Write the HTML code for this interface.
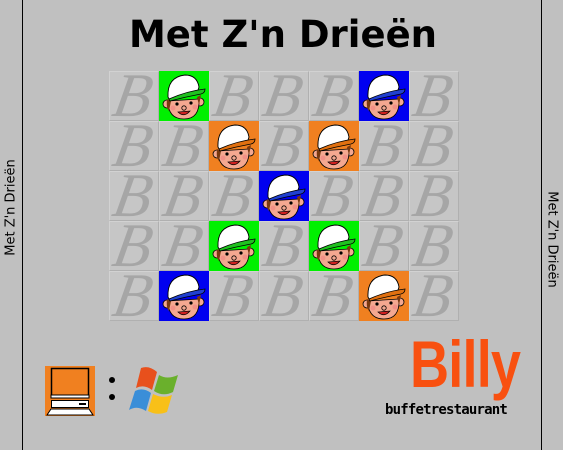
<!DOCTYPE html>
<html><head><meta charset="utf-8"><style>
body{margin:0;width:563px;height:450px;background:#c0c0c0;position:relative;overflow:hidden;font-family:"DejaVu Sans","Liberation Sans",sans-serif}
.vl{position:absolute;top:0;width:1px;height:450px;background:#000}
.title{position:absolute;left:0;width:566px;top:13px;text-align:center;font-weight:bold;font-size:37px;color:#000}
.side{position:absolute;font-size:13px;white-space:nowrap;width:130px;text-align:center}
.grid{position:absolute;left:109px;top:71px;width:350px;height:250px;display:grid;grid-template-columns:repeat(7,50px);grid-template-rows:repeat(5,50px)}
.c{width:50px;height:50px;position:relative;box-sizing:border-box;overflow:hidden}
.b{background:#c6c6c6;border:1px solid #b0b0b0;border-top-color:#d2d2d2;border-left-color:#d2d2d2}
.b span{position:absolute;left:4px;top:-8px;font-family:"Liberation Serif",serif;font-style:italic;font-size:62px;color:#a6a6a6;line-height:64px;transform:skewX(-10deg)}
.g{background:#00f000}.o{background:#f08020}.u{background:#0000f0}
.c svg{position:absolute;left:0;top:0}
</style></head><body>
<div class="vl" style="left:22px"></div>
<div class="vl" style="left:541px"></div>
<div class="title">Met Z'n Drieën</div>
<div class="side" style="left:-54px;top:200px;transform:rotate(-90deg)">Met Z'n Drieën</div>
<div class="side" style="left:487px;top:232px;transform:rotate(90deg)">Met Z'n Drieën</div>
<svg width="0" height="0" style="position:absolute"><defs>
<symbol id="f" viewBox="0 0 50 50">
<circle cx="8" cy="33" r="4" fill="#f4a890" stroke="#000" stroke-width="0.8"/>
<circle cx="41" cy="31" r="4" fill="#f4a890" stroke="#000" stroke-width="0.8"/>
<path d="M9 30 Q9 48 25 48 Q41 48 40 28 Z" fill="#f4a890" stroke="#000" stroke-width="0.8"/>
<path d="M8 28 Q7 37 10 40 L12 30 Z M38 26 L42 24 L40 34 Z" fill="#7a3a10"/>
<path d="M9 26 Q8 6 26 4 Q38 4 40 16 L38 22 Q25 24 10 28 Z" fill="#fff" stroke="#000" stroke-width="0.9"/>
<path d="M10 28 Q28 20 46 18 Q46 22 42 23 Q26 26 11 30 Z" fill="currentColor" stroke="#000" stroke-width="0.8"/>
<circle cx="18" cy="33" r="1.6"/><circle cx="32" cy="32" r="1.6"/>
<circle cx="25" cy="37" r="2.2" fill="none" stroke="#000" stroke-width="0.8"/>
<circle cx="14" cy="37" r="2.5" fill="#f08080" opacity=".6"/><circle cx="36" cy="36" r="2.5" fill="#f08080" opacity=".6"/>
<path d="M19 41 Q25 47 31 40 Z" fill="#d02020" stroke="#000" stroke-width="0.7"/>
</symbol></defs></svg>
<div class="grid">
<div class="c b"><span>B</span></div><div class="c g"><svg width="50" height="50" style="color:#20c020"><use href="#f"/></svg></div><div class="c b"><span>B</span></div><div class="c b"><span>B</span></div><div class="c b"><span>B</span></div><div class="c u"><svg width="50" height="50" style="color:#2040d0"><use href="#f"/></svg></div><div class="c b"><span>B</span></div>
<div class="c b"><span>B</span></div><div class="c b"><span>B</span></div><div class="c o"><svg width="50" height="50" style="color:#e07010"><use href="#f"/></svg></div><div class="c b"><span>B</span></div><div class="c o"><svg width="50" height="50" style="color:#e07010"><use href="#f"/></svg></div><div class="c b"><span>B</span></div><div class="c b"><span>B</span></div>
<div class="c b"><span>B</span></div><div class="c b"><span>B</span></div><div class="c b"><span>B</span></div><div class="c u"><svg width="50" height="50" style="color:#2040d0"><use href="#f"/></svg></div><div class="c b"><span>B</span></div><div class="c b"><span>B</span></div><div class="c b"><span>B</span></div>
<div class="c b"><span>B</span></div><div class="c b"><span>B</span></div><div class="c g"><svg width="50" height="50" style="color:#20c020"><use href="#f"/></svg></div><div class="c b"><span>B</span></div><div class="c g"><svg width="50" height="50" style="color:#20c020"><use href="#f"/></svg></div><div class="c b"><span>B</span></div><div class="c b"><span>B</span></div>
<div class="c b"><span>B</span></div><div class="c u"><svg width="50" height="50" style="color:#2040d0"><use href="#f"/></svg></div><div class="c b"><span>B</span></div><div class="c b"><span>B</span></div><div class="c b"><span>B</span></div><div class="c o"><svg width="50" height="50" style="color:#e07010"><use href="#f"/></svg></div><div class="c b"><span>B</span></div>
</div>
<svg style="position:absolute;left:45px;top:366px" width="50" height="50" viewBox="0 0 50 50">
<rect width="50" height="50" fill="#f08020"/>
<rect x="6.5" y="2.5" width="37" height="27" fill="#f08020" stroke="#000" stroke-width="1.5"/>
<rect x="6" y="29" width="38" height="3" fill="#fff" stroke="#000"/>
<rect x="6.5" y="34.5" width="37" height="7" fill="#fff" stroke="#000"/>
<rect x="34" y="37" width="7" height="2"/>
<path d="M6 43 L44 43 L48 49 L2 49 Z" fill="#fff" stroke="#000"/>
</svg>
<div style="position:absolute;left:109px;top:377px;width:6px;height:6px;border-radius:3px;background:#000"></div>
<div style="position:absolute;left:109px;top:394px;width:6px;height:6px;border-radius:3px;background:#000"></div>
<svg style="position:absolute;left:127px;top:366px" width="56" height="50" viewBox="0 0 56 50">
<path d="M14 2 Q22 -1 30 6 L25 24 Q17 18 9 22 Z" fill="#e8501c"/>
<path d="M32 9 Q40 14 51 9 L46 26 Q36 31 27 25 Z" fill="#6ab02c"/>
<path d="M8 25 Q16 21 24 27 L19 45 Q10 39 2 44 Z" fill="#3a8ed8"/>
<path d="M26 28 Q36 33 45 29 L40 46 Q30 50 21 45 Z" fill="#f8c018"/>
</svg>
<div style="position:absolute;left:410px;top:328px;font-family:'Liberation Sans Narrow','Liberation Sans',sans-serif;font-weight:bold;font-size:66px;color:#f85010;letter-spacing:-1px;line-height:72px;transform:scaleX(0.82);transform-origin:left top">Billy</div>
<div style="position:absolute;left:385px;top:402px;font-family:'DejaVu Sans Mono',monospace;font-weight:bold;font-size:14px;color:#000;letter-spacing:-0.8px">buffetrestaurant</div>
</body></html>
